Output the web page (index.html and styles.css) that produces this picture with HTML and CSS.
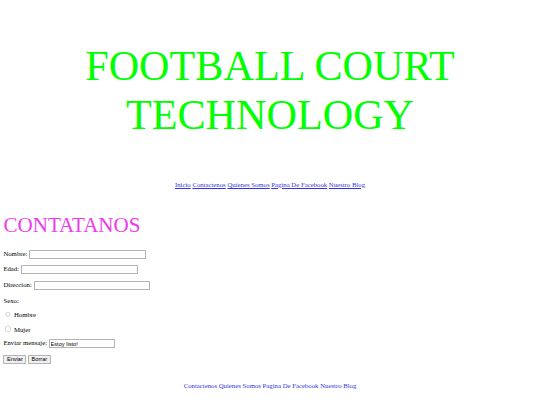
FILE: index.html
```html
<!DOCTYPE html>
<html lang="es">
<head>
<meta charset="utf-8">
<title>Football Court Technology</title>
<link rel="stylesheet" href="styles.css">
</head>
<body>
<header class="top">
  <h1 class="title">FOOTBALL COURT TECHNOLOGY</h1>
  <nav class="menu">
    <a href="#">Inicio</a>
    <a href="#">Contactenos</a>
    <a href="#">Quienes Somos</a>
    <a href="#">Pagina De Facebook</a>
    <a href="#">Nuestro Blog</a>
  </nav>
</header>
<main>
  <h2 class="section-title">CONTATANOS</h2>
  <form class="contact">
    <p>Nombre: <input type="text" class="field wide"></p>
    <p>Edad: <input type="text" class="field wide"></p>
    <p>Direccion: <input type="text" class="field wide"></p>
    <p>Sexo:</p>
    <p><input type="radio" name="sexo" class="radio"> Hombre</p>
    <p><input type="radio" name="sexo" class="radio"> Mujer</p>
    <p>Enviar mensaje: <input type="text" class="field message" value="Estoy listo!"></p>
    <p><button type="button" class="btn">Enviar</button> <button type="reset" class="btn">Borrar</button></p>
  </form>
</main>
<footer class="bottom">
  <a href="#">Contactenos</a>
  <a href="#">Quienes Somos</a>
  <a href="#">Pagina De Facebook</a>
  <a href="#">Nuestro Blog</a>
</footer>
</body>
</html>
```

FILE: styles.css
```css
html {
  zoom: 0.421875;
  overflow: hidden;
}
body {
  margin: 8px;
  font-family: "Liberation Serif", "Times New Roman", serif;
  font-size: 16px;
  color: #000;
  background: #fff;
}
a {
  color: #3333dd;
}
.top {
  text-align: center;
}
.title {
  font-size: 100px;
  font-weight: normal;
  color: #00ff00;
  margin: 90px 0 0;
}
.menu {
  margin-top: 98px;
}
.section-title {
  font-size: 50px;
  font-weight: normal;
  color: #ee3bee;
  margin: 60px 0 28px;
}
.contact p {
  margin: 16px 0;
}
.field {
  box-sizing: border-box;
  height: 21px;
  border: 2px solid #b4b4b4;
  border-radius: 2px;
  padding: 1px 2px;
  font-family: "Liberation Sans", Arial, sans-serif;
  font-size: 13.33px;
  color: #000;
}
.wide {
  width: 277px;
}
.message {
  width: 157px;
}
.radio {
  opacity: 0.7;
}
.btn {
  font-family: "Liberation Sans", Arial, sans-serif;
  font-size: 13.33px;
  background: #efefef;
  border: 2px solid #b4b4b4;
  border-radius: 2px;
  padding: 1px 6px;
  color: #000;
}
.bottom {
  text-align: center;
  margin-top: 44px;
}
```
